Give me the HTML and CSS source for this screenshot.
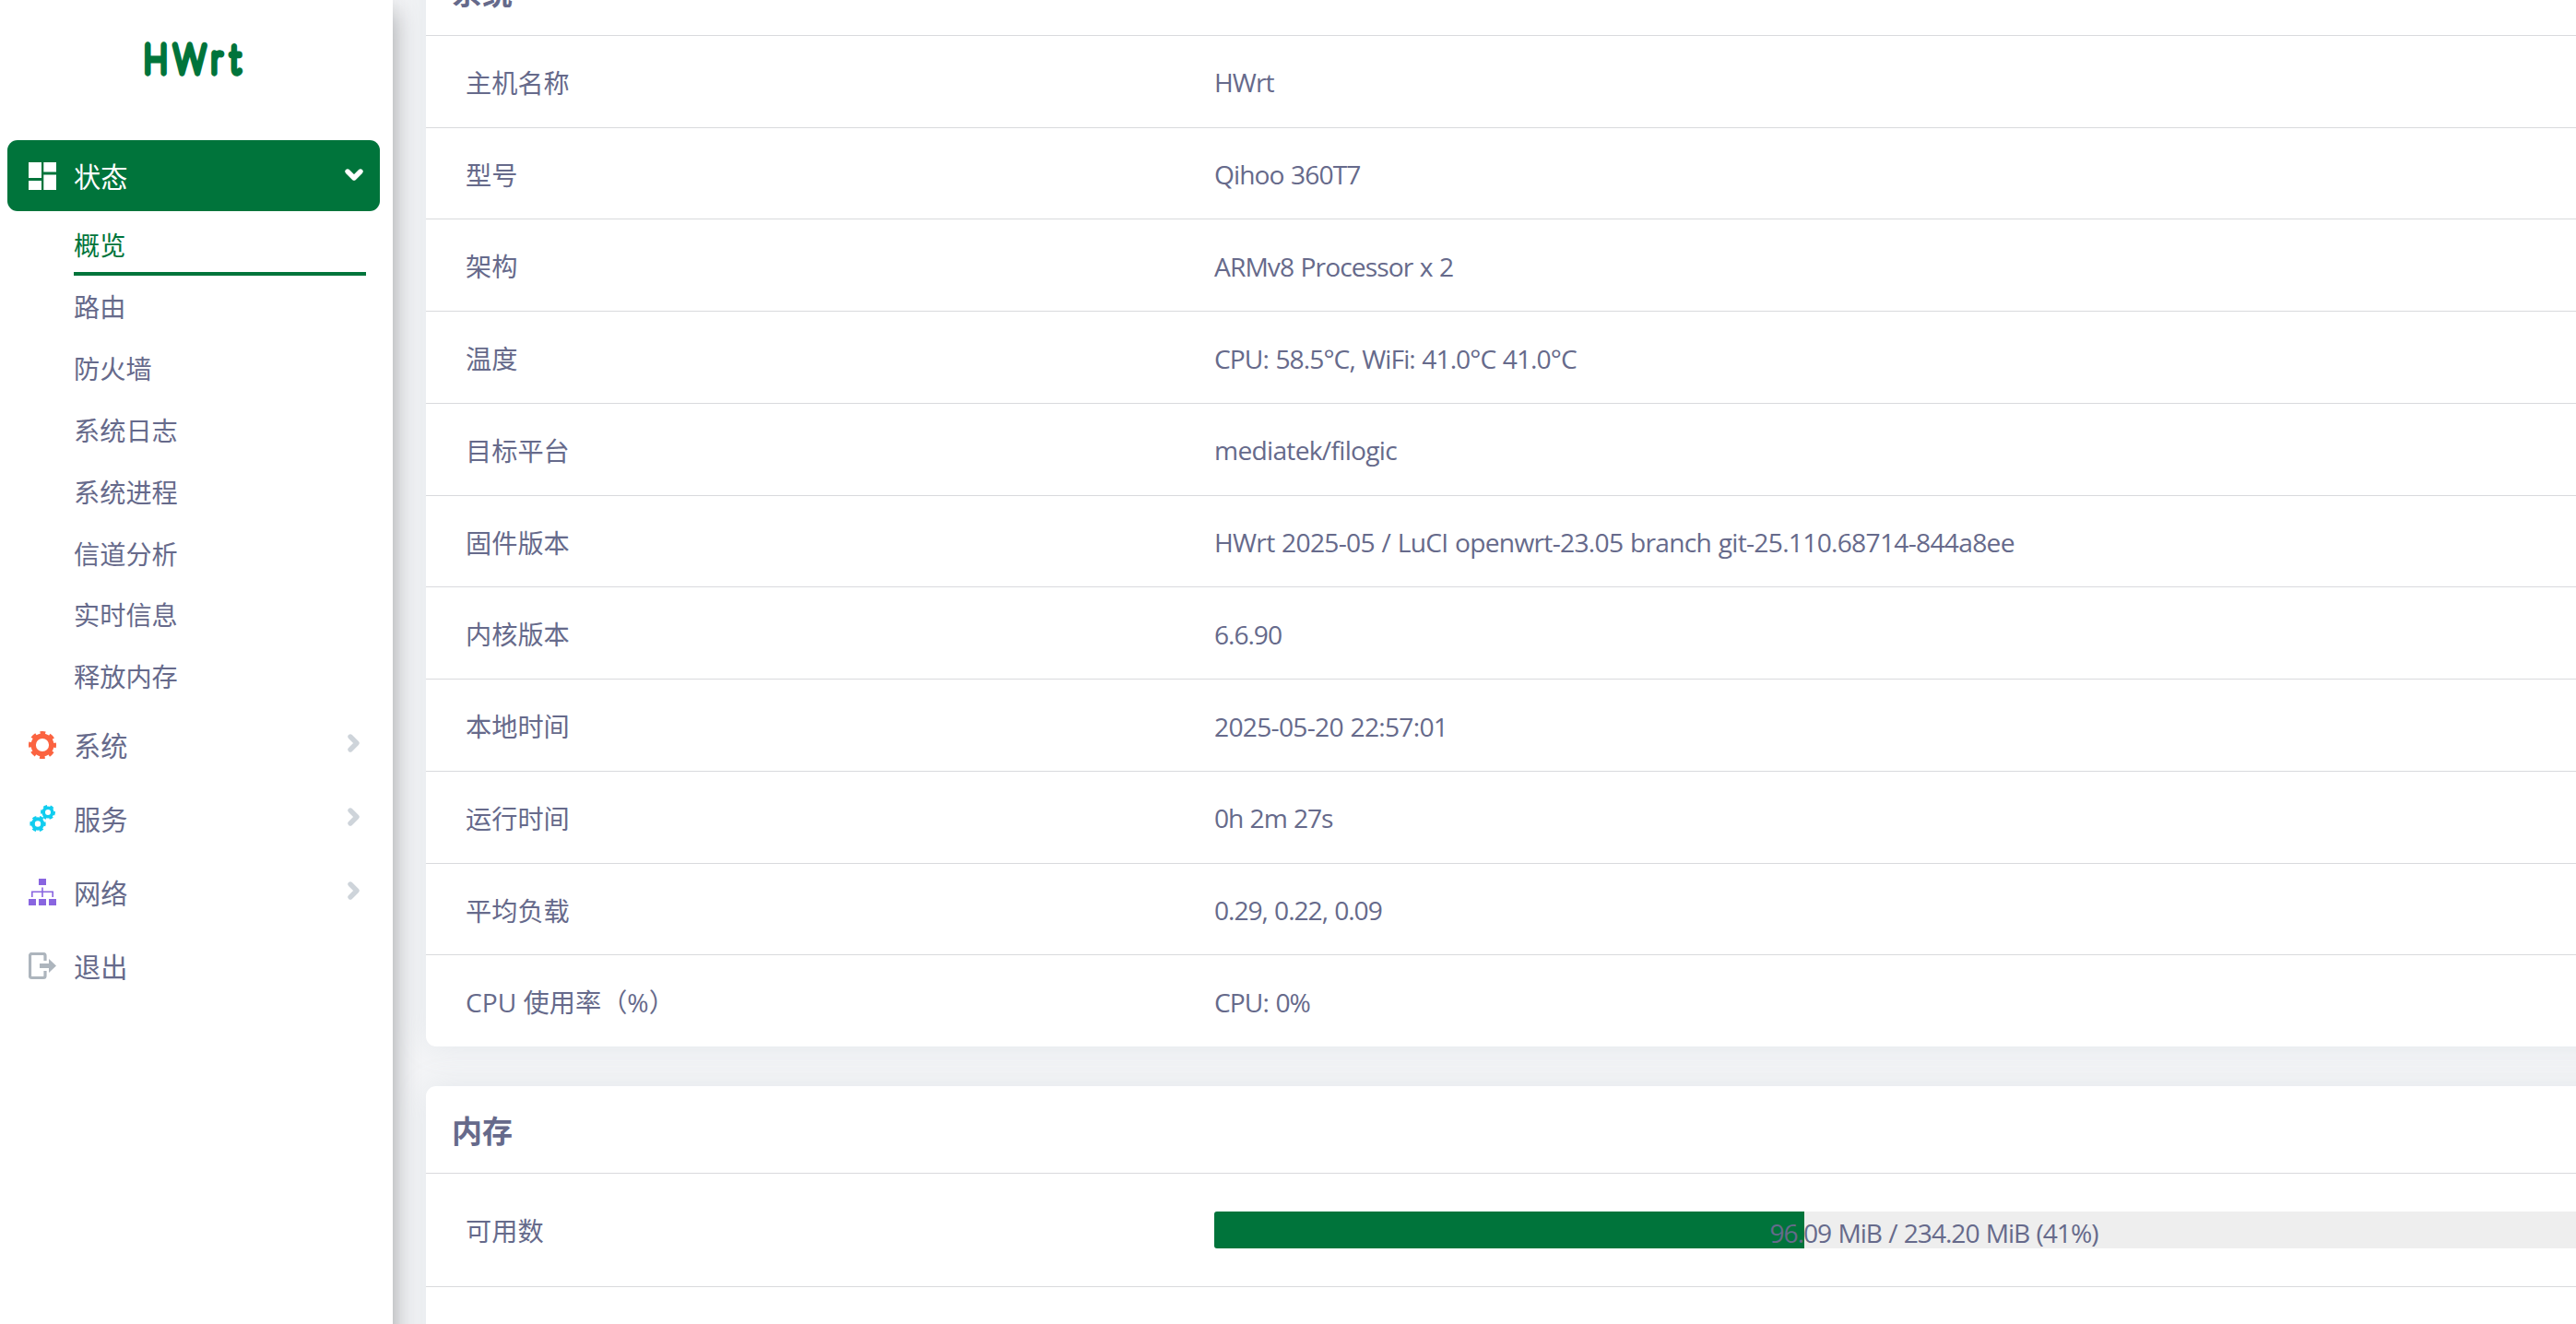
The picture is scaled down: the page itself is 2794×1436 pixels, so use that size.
FILE: index.html
```html
<!DOCTYPE html>
<html lang="zh-CN">
<head>
<meta charset="utf-8">
<title>HWrt - 概览</title>
<link rel="stylesheet" href="styles.css">
</head>
<body>
<div class="app">
  <aside class="sidebar">
    <svg class="brand" viewBox="0 0 120 56" aria-label="HWrt">
      <text class="brand-text" transform="scale(.82 1)" x="5 44.500 94 119" y="41.500">HWrt</text>
    </svg>
    <nav class="menu">
      <a class="item active">
        <svg class="icon" viewBox="0 0 30 30" fill="#fff"><path d="M0 0h14v17H0zM16.300 0H30v10.500H16.300zM0 20h14v10H0zM16.300 13.500H30V30H16.300z"/></svg>
        <span>状态</span>
        <svg class="arrow down" viewBox="0 0 20 14"><path d="M3 3l7 7 7-7"/></svg>
      </a>
      <ul class="sub">
        <li class="current">概览</li>
        <li>路由</li>
        <li>防火墙</li>
        <li>系统日志</li>
        <li>系统进程</li>
        <li>信道分析</li>
        <li>实时信息</li>
        <li>释放内存</li>
      </ul>
      <a class="item">
        <svg class="icon" viewBox="0 0 30 30"><g fill="none" stroke="#fb6340"><circle cx="15" cy="15" r="9.800" stroke-width="5.400"/><circle cx="15" cy="15" r="13" stroke-width="4" stroke-dasharray="5.600 4.610" stroke-dashoffset="2.800"/></g></svg>
        <span>系统</span>
        <svg class="arrow" viewBox="0 0 14 20"><path d="M3 3l7 7-7 7"/></svg>
      </a>
      <a class="item">
        <svg class="icon" viewBox="0 0 30 30"><g fill="none" stroke="#11cdef"><circle cx="10" cy="20.500" r="5.200" stroke-width="4"/><circle cx="10" cy="20.500" r="7" stroke-width="3.400" stroke-dasharray="4 3.330" stroke-dashoffset="-1.660" transform="rotate(30 10 20.500)"/><circle cx="21" cy="8" r="4.800" stroke-width="3.600"/><circle cx="21" cy="8" r="6.500" stroke-width="3" stroke-dasharray="3.700 3.107" stroke-dashoffset="-1.550" transform="rotate(30 21 8)"/></g></svg>
        <span>服务</span>
        <svg class="arrow" viewBox="0 0 14 20"><path d="M3 3l7 7-7 7"/></svg>
      </a>
      <a class="item">
        <svg class="icon" viewBox="0 0 30 30" fill="#8965e0"><path d="M11 0h8v7h-8zM0 22h8v7H0zM11 22h8v7h-8zM22 22h8v7h-8zM3 13.500h24V20h-1.600v-5H15.800v5h-1.600v-5H4.600v5H3zM14.200 9.500h1.600V14h-1.600z"/></svg>
        <span>网络</span>
        <svg class="arrow" viewBox="0 0 14 20"><path d="M3 3l7 7-7 7"/></svg>
      </a>
      <a class="item">
        <svg class="icon" viewBox="0 0 30 30"><path d="M18 9V3.500a2 2 0 0 0-2-2H3.500a2 2 0 0 0-2 2v22a2 2 0 0 0 2 2H16a2 2 0 0 0 2-2V20" fill="none" stroke="#adb5bd" stroke-width="3.200"/><path d="M12 12h10V7l8 7.500-8 7.500v-5H12z" fill="#adb5bd"/></svg>
        <span>退出</span>
      </a>
    </nav>
  </aside>
  <main class="content">
    <section class="card system">
      <h3>系统</h3>
      <div class="row"><div>主机名称</div><div><span>HWrt</span></div></div>
      <div class="row"><div>型号</div><div><span>Qihoo 360T7</span></div></div>
      <div class="row"><div>架构</div><div><span>ARMv8 Processor x 2</span></div></div>
      <div class="row"><div>温度</div><div><span>CPU: 58.5°C, WiFi: 41.0°C 41.0°C</span></div></div>
      <div class="row"><div>目标平台</div><div><span class="loose">mediatek/filogic</span></div></div>
      <div class="row"><div>固件版本</div><div><span class="loose">HWrt 2025-05 / LuCI openwrt-23.05 branch git-25.110.68714-844a8ee</span></div></div>
      <div class="row"><div>内核版本</div><div><span class="tight">6.6.90</span></div></div>
      <div class="row"><div>本地时间</div><div><span class="loose">2025-05-20 22:57:01</span></div></div>
      <div class="row"><div>运行时间</div><div><span class="tight">0h 2m 27s</span></div></div>
      <div class="row"><div>平均负载</div><div><span class="tight">0.29, 0.22, 0.09</span></div></div>
      <div class="row"><div>CPU 使用率（%）</div><div><span>CPU: 0%</span></div></div>
    </section>
    <section class="card memory">
      <h3>内存</h3>
      <div class="row"><div>可用数</div><div class="progress"><div class="bar" style="width:41%"></div><span class="tight">96.09 MiB / 234.20 MiB (41%)</span></div></div>
      <div class="row"></div>
    </section>
  </main>
</div>
</body>
</html>
```
FILE: styles.css
```css
* { box-sizing: border-box; }
body {
  margin: 0;
  overflow: hidden;
  background: #f4f5f7;
  color: #666a8b;
  font: 28.200px/42px "Open Sans", "Noto Sans CJK SC", sans-serif;
}
.app { display: flex; align-items: flex-start; height: 1436px; overflow: hidden; }
.sidebar {
  position: relative;
  z-index: 1;
  flex: 0 0 426px;
  height: 1500px;
  background: #fff;
  box-shadow: 0 12px 26px 0 rgba(30, 36, 40, .42);
}
.brand { display: block; width: 120px; height: 56px; margin: 37px 0 59px 152px; overflow: visible; }
.brand-text {
  font-family: Lato, sans-serif;
  font-size: 42px;
  font-weight: 100;
  fill: #00743b;
  stroke: #00743b;
  stroke-width: 7.400px;
  stroke-linejoin: round;
  stroke-linecap: round;
}
.menu { padding: 0 14px 0 8px; }
.item {
  display: flex;
  align-items: center;
  height: 76px;
  margin-bottom: 4px;
  padding: 0 19px 0 23px;
  border-radius: 11px;
  font-size: 29.200px;
}
.item.active { height: 77px; margin: 0; background: #00743b; color: #fff; }
.item span { padding-top: 3px; }
.icon { width: 30px; height: 30px; margin-right: 19px; }
.arrow { width: 14px; height: 20px; margin: -4px 2px 0 auto; overflow: visible; }
.arrow.down { width: 20px; height: 14px; margin: -1px -1px 0 auto; }
.arrow path { fill: none; stroke: #ced4da; stroke-width: 5.400; stroke-linecap: round; stroke-linejoin: round; }
.arrow.down path { stroke: #fff; }
.sub { list-style: none; margin: 0 0 3px; padding: 5px 15px 0 72px; }
.sub li { height: 66.800px; padding-top: 2px; display: flex; align-items: center; }
.sub li.current { height: 65px; padding-top: 3px; border-bottom: 4px solid #00743b; color: #00743b; }
.content { flex: none; width: 2500px; padding-left: 36px; }
.card { width: 2459px; border-radius: 11px; background: #fff; box-shadow: 0 0 34px 0 rgba(136, 152, 170, .15); }
.card h3 { height: 94px; margin: 0; padding: 0 28px; font-size: 33px; line-height: 97px; font-weight: 700; }
.system { margin-top: -56.100px; }
.memory { height: 400px; margin-top: 43px; }
.row {
  display: grid;
  grid-template-columns: 812px 1561px;
  align-items: center;
  height: 99.750px;
  padding: 2px 43px 0;
  border-top: 1px solid #d9dadd;
}
.memory .row { height: 123px; padding: 0 43px 1px; }
.row > div:first-child { padding-top: 1px; }
.memory .row > div:first-child { padding-top: 3px; }
.row span { letter-spacing: -.920px; word-spacing: 1px; }
.row .loose { letter-spacing: -.720px; }
.row .tight { letter-spacing: -1.050px; }
.progress { position: relative; height: 40px; border-radius: 3px; background: #eee; overflow: hidden; text-align: center; }
.bar { height: 40px; background: #00743b; }
.progress span { position: absolute; inset: 0; line-height: 46px; }
```
